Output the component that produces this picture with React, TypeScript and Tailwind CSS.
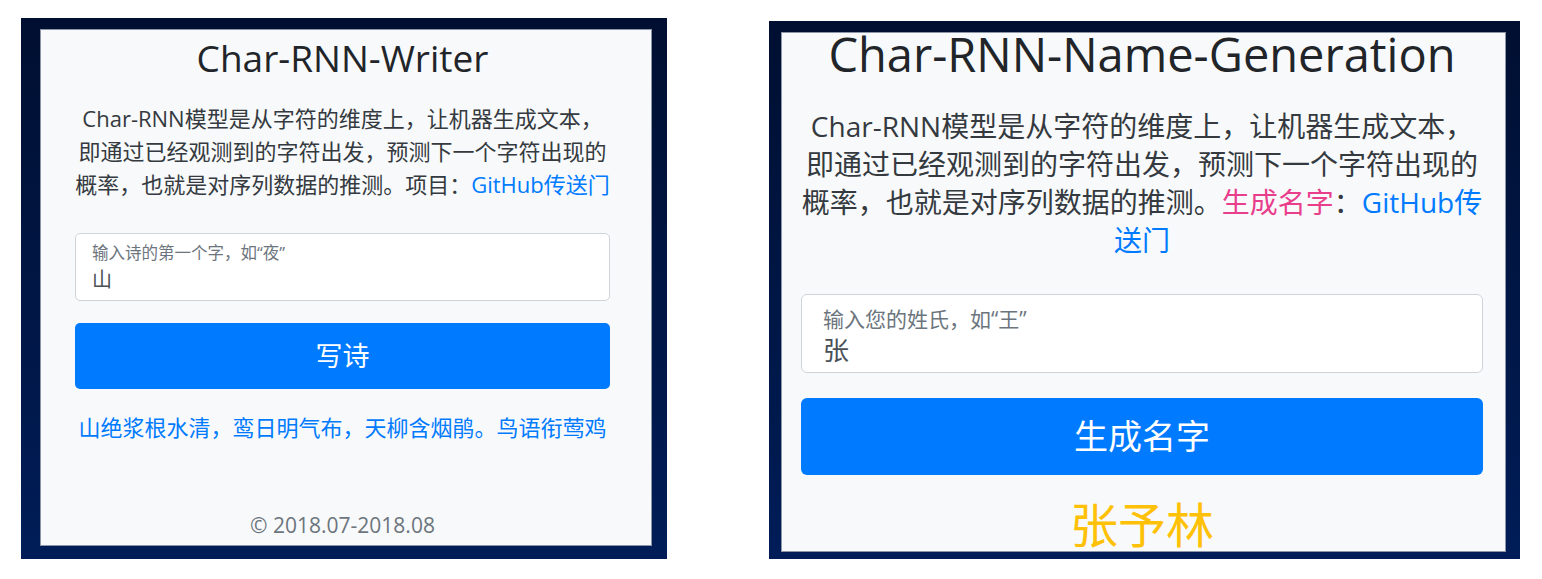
import React from "react";

const font = "font-['Open_Sans','Noto_Sans_CJK_SC',sans-serif]";

export default function App() {
  return (
    <div className={`w-full h-[579px] bg-white overflow-hidden ${font}`}>
      <div className="flex items-start pl-[21px] gap-[102px]">
        {/* ====================== WRITER ====================== */}
        <section className="mt-[18px] w-[646px] h-[541px] pl-[19px] pt-[11px] pr-[15px] pb-[13px] bg-gradient-to-b from-[#000f31] to-[#001d58]">
          <div className="h-full bg-[#f8f9fa] border border-[#8d95a8] pl-[34px] pr-[41px] flex flex-col">
            <h1 className="shrink-0 mt-[8px] text-center text-[37px] leading-[40px] text-[#212529] font-normal">
              Char-RNN-Writer
            </h1>
            <p className="shrink-0 mt-[24px] text-center text-[22px] leading-[33px] text-[#343a40]">
              Char-RNN模型是从字符的维度上，让机器生成文本，
              <br />
              即通过已经观测到的字符出发，预测下一个字符出现的
              <br />
              概率，也就是对序列数据的推测。项目：
              <span className="text-[#007bff]">GitHub传送门</span>
            </p>

            <div className="shrink-0 mt-[32px] h-[68px] bg-white border border-[#ced4da] rounded-[5px] pl-[16px] flex flex-col">
              <span className="mt-[8px] text-[16.5px] leading-[22px] text-[#6c757d]">输入诗的第一个字，如“夜”</span>
              <span className="mt-[3px] text-[20px] leading-[26px] text-[#495057]">山</span>
            </div>

            <button className="shrink-0 mt-[22px] h-[66px] w-full bg-[#007bff] rounded-[5px] text-white text-[27px]">
              写诗
            </button>

            <p className="shrink-0 mt-[22px] text-center text-[22px] leading-[33px] text-[#007bff]">
              山绝浆根水清，鸾日明气布，天柳含烟鹃。鸟语衔莺鸡
            </p>

            <p className="mt-auto mb-[6px] text-center text-[21px] leading-[28px] text-[#6c757d]">
              © 2018.07-2018.08
            </p>
          </div>
        </section>

        {/* ====================== NAME GENERATION ====================== */}
        <section className="mt-[21px] w-[751px] h-[538px] pl-[12px] pt-[11px] pr-[14px] pb-[7px] bg-gradient-to-b from-[#000f31] to-[#001d58]">
          <div className="h-full bg-[#f8f9fa] border border-[#8d95a8] pl-[19px] pr-[22px] flex flex-col">
            <h1 className="shrink-0 mt-[1px] text-center text-[47px] leading-[40px] text-[#212529] font-normal">
              Char-RNN-Name-Generation
            </h1>
            <p className="shrink-0 mt-[33px] text-center text-[28px] leading-[38px] text-[#343a40]">
              Char-RNN模型是从字符的维度上，让机器生成文本，
              <br />
              即通过已经观测到的字符出发，预测下一个字符出现的
              <br />
              概率，也就是对序列数据的推测。
              <span className="text-[#e83e8c]">生成名字</span>：
              <span className="text-[#007bff]">GitHub传</span>
              <br />
              <span className="text-[#007bff]">送门</span>
            </p>

            <div className="shrink-0 mt-[35px] h-[79px] bg-white border border-[#ced4da] rounded-[6px] pl-[21px] flex flex-col">
              <span className="mt-[10px] text-[21px] leading-[28px] text-[#6c757d]">输入您的姓氏，如“王”</span>
              <span className="mt-[1px] text-[26px] leading-[32px] text-[#495057]">张</span>
            </div>

            <button className="shrink-0 mt-[25px] h-[77px] w-full bg-[#007bff] rounded-[6px] text-white text-[34px]">
              生成名字
            </button>

            <p className="shrink-0 mt-[26px] text-center text-[48px] leading-[48px] text-[#ffc107]">张予林</p>
          </div>
        </section>
      </div>
    </div>
  );
}
